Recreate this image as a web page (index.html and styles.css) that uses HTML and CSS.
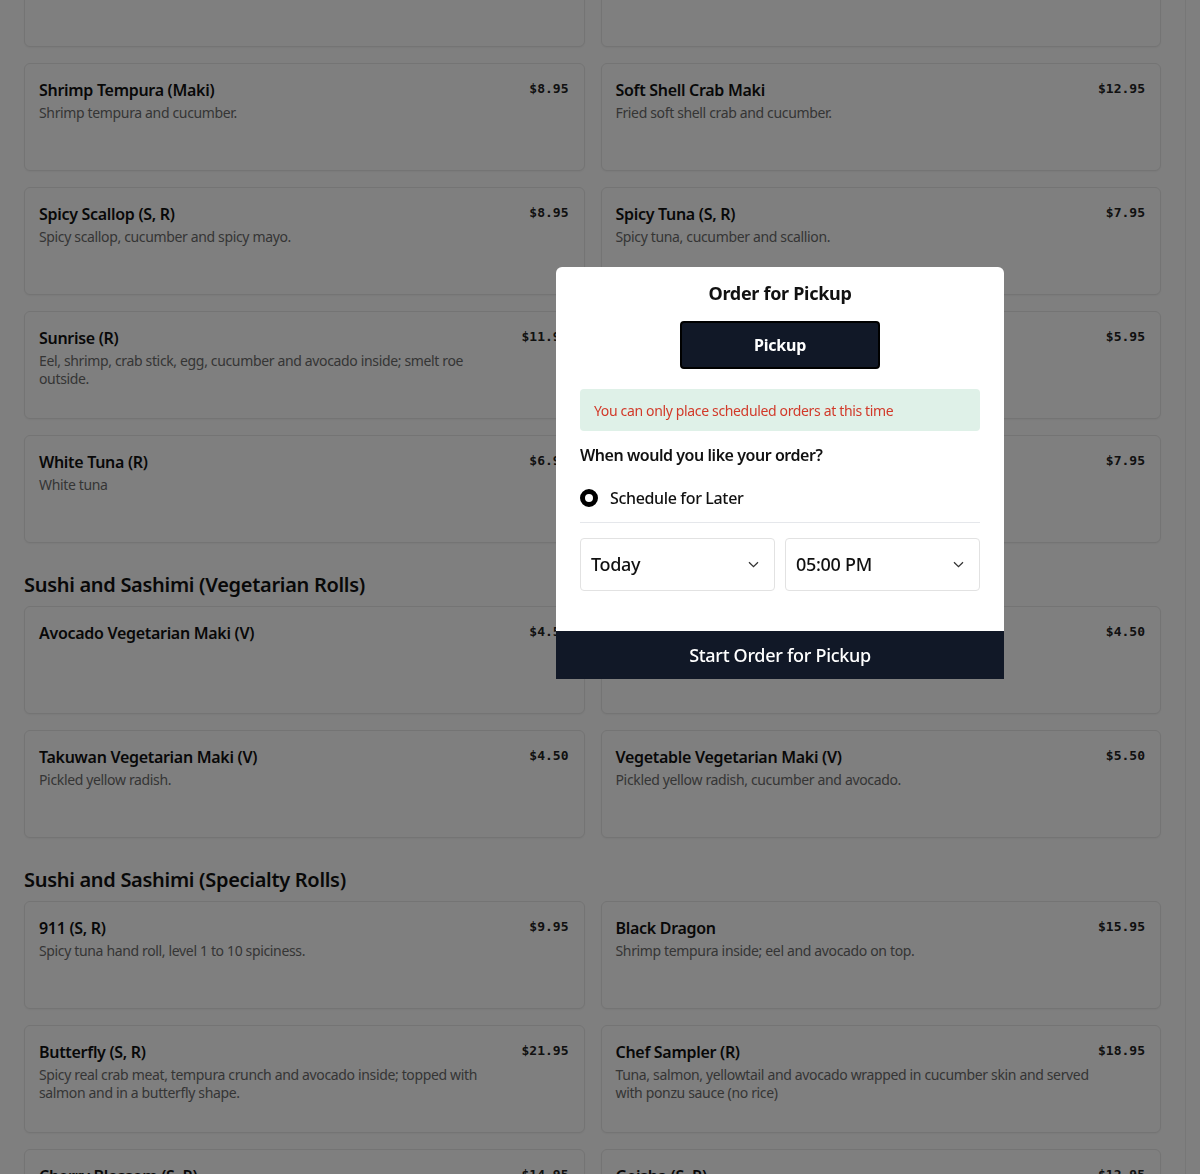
FILE: index.html
```html
<!DOCTYPE html>
<html lang="en">
<head>
<meta charset="utf-8">
<title>Menu - Order for Pickup</title>
<link rel="stylesheet" href="styles.css">
</head>
<body>
<div class="layout">
  <main class="main">
    <section class="section section-first">
      <div class="grid">
        <div class="card"><div class="card-text"><div class="card-title">Salmon Avocado Maki</div><div class="card-desc">Salmon and avocado.</div></div><div class="card-price">$7.95</div></div>
        <div class="card"><div class="card-text"><div class="card-title">Salmon Skin Maki</div><div class="card-desc">Salmon skin and cucumber.</div></div><div class="card-price">$6.95</div></div>

        <div class="card"><div class="card-text"><div class="card-title">Shrimp Tempura (Maki)</div><div class="card-desc">Shrimp tempura and cucumber.</div></div><div class="card-price">$8.95</div></div>
        <div class="card"><div class="card-text"><div class="card-title">Soft Shell Crab Maki</div><div class="card-desc">Fried soft shell crab and cucumber.</div></div><div class="card-price">$12.95</div></div>

        <div class="card"><div class="card-text"><div class="card-title">Spicy Scallop (S, R)</div><div class="card-desc">Spicy scallop, cucumber and spicy mayo.</div></div><div class="card-price">$8.95</div></div>
        <div class="card"><div class="card-text"><div class="card-title">Spicy Tuna (S, R)</div><div class="card-desc">Spicy tuna, cucumber and scallion.</div></div><div class="card-price">$7.95</div></div>

        <div class="card"><div class="card-text"><div class="card-title">Sunrise (R)</div><div class="card-desc">Eel, shrimp, crab stick, egg, cucumber and avocado inside; smelt roe outside.</div></div><div class="card-price">$11.95</div></div>
        <div class="card"><div class="card-text"><div class="card-title">Tuna Maki</div><div class="card-desc">Tuna.</div></div><div class="card-price">$5.95</div></div>

        <div class="card"><div class="card-text"><div class="card-title">White Tuna (R)</div><div class="card-desc">White tuna</div></div><div class="card-price">$6.95</div></div>
        <div class="card"><div class="card-text"><div class="card-title">Yellowtail Scallion Maki</div><div class="card-desc">Yellowtail and scallion.</div></div><div class="card-price">$7.95</div></div>
      </div>
    </section>

    <section class="section">
      <h2 class="section-title">Sushi and Sashimi (Vegetarian Rolls)</h2>
      <div class="grid">
        <div class="card"><div class="card-text"><div class="card-title">Avocado Vegetarian Maki (V)</div></div><div class="card-price">$4.50</div></div>
        <div class="card"><div class="card-text"><div class="card-title">Cucumber Vegetarian Maki (V)</div></div><div class="card-price">$4.50</div></div>

        <div class="card"><div class="card-text"><div class="card-title">Takuwan Vegetarian Maki (V)</div><div class="card-desc">Pickled yellow radish.</div></div><div class="card-price">$4.50</div></div>
        <div class="card"><div class="card-text"><div class="card-title">Vegetable Vegetarian Maki (V)</div><div class="card-desc">Pickled yellow radish, cucumber and avocado.</div></div><div class="card-price">$5.50</div></div>
      </div>
    </section>

    <section class="section">
      <h2 class="section-title">Sushi and Sashimi (Specialty Rolls)</h2>
      <div class="grid">
        <div class="card"><div class="card-text"><div class="card-title">911 (S, R)</div><div class="card-desc">Spicy tuna hand roll, level 1 to 10 spiciness.</div></div><div class="card-price">$9.95</div></div>
        <div class="card"><div class="card-text"><div class="card-title">Black Dragon</div><div class="card-desc">Shrimp tempura inside; eel and avocado on top.</div></div><div class="card-price">$15.95</div></div>

        <div class="card"><div class="card-text"><div class="card-title">Butterfly (S, R)</div><div class="card-desc">Spicy real crab meat, tempura crunch and avocado inside; topped with salmon and in a butterfly shape.</div></div><div class="card-price">$21.95</div></div>
        <div class="card"><div class="card-text"><div class="card-title">Chef Sampler (R)</div><div class="card-desc">Tuna, salmon, yellowtail and avocado wrapped in cucumber skin and served with ponzu sauce (no rice)</div></div><div class="card-price">$18.95</div></div>

        <div class="card"><div class="card-text"><div class="card-title">Cherry Blossom (S, R)</div><div class="card-desc">Spicy tuna inside; tuna and salmon on top.</div></div><div class="card-price">$14.95</div></div>
        <div class="card"><div class="card-text"><div class="card-title">Geisha (S, R)</div><div class="card-desc">Spicy salmon inside; avocado on top.</div></div><div class="card-price">$12.95</div></div>
      </div>
    </section>
  </main>
  <aside class="side"></aside>
</div>

<div class="overlay"></div>

<div class="modal" role="dialog" aria-label="Order for Pickup">
  <div class="modal-body">
    <h1 class="modal-title">Order for Pickup</h1>
    <div class="mode-row">
      <button class="mode-btn" type="button">Pickup</button>
    </div>
    <div class="alert">You can only place scheduled orders at this time</div>
    <div class="question">When would you like your order?</div>
    <label class="radio-row">
      <span class="radio"></span>
      <span class="radio-label">Schedule for Later</span>
    </label>
    <div class="divider"></div>
    <div class="selects">
      <div class="select">
        <span class="select-value">Today</span>
        <svg class="chev" width="11" height="7" viewBox="0 0 11 7"><path d="M1 1.2 L5.5 5.7 L10 1.2" fill="none" stroke="#333" stroke-width="1.3"/></svg>
      </div>
      <div class="select">
        <span class="select-value">05:00 PM</span>
        <svg class="chev" width="11" height="7" viewBox="0 0 11 7"><path d="M1 1.2 L5.5 5.7 L10 1.2" fill="none" stroke="#333" stroke-width="1.3"/></svg>
      </div>
    </div>
  </div>
  <button class="start-btn" type="button">Start Order for Pickup</button>
</div>
</body>
</html>
```

FILE: styles.css
```css
* { box-sizing: border-box; }

html, body {
  margin: 0;
  padding: 0;
  background: #ffffff;
  font-family: "Noto Sans", "Open Sans", sans-serif;
  color: #111111;
  overflow: hidden;
  height: 1174px;
}

.layout {
  display: flex;
  align-items: flex-start;
}

.main {
  width: 1186px;
  flex: 0 0 1186px;
  padding: 0 24px;
  border-right: 1px solid #eeeeee;
  min-height: 1174px;
}

.side {
  flex: 1;
}

.section-first {
  margin-top: -61px;
}

.section-title {
  font-size: 20px;
  line-height: 28px;
  font-weight: 600;
  margin: 28px 0 7px;
  letter-spacing: -0.3px;
  color: #111111;
}

.grid {
  display: grid;
  grid-template-columns: 1fr 1fr;
  gap: 16px;
}

.card {
  height: 108px;
  border: 1px solid #e8e8e8;
  border-radius: 6px;
  background: #ffffff;
  box-shadow: 0 1px 2px rgba(0, 0, 0, 0.05);
  padding: 14px 15px 14px 14px;
  display: flex;
  align-items: flex-start;
  gap: 4px;
}

.card-text {
  flex: 1;
  min-width: 0;
}

.card-title {
  font-size: 16px;
  line-height: 24px;
  font-weight: 600;
  letter-spacing: -0.3px;
  color: #111111;
}

.card-desc {
  margin-top: 2px;
  font-size: 14px;
  line-height: 18px;
  color: #6b6b6b;
  letter-spacing: -0.35px;
  max-width: 475px;
}

.card-price {
  font-family: "DejaVu Sans Mono", "Liberation Mono", monospace;
  font-weight: 700;
  font-size: 13px;
  line-height: 18px;
  color: #222222;
  white-space: nowrap;
  padding-top: 2px;
}

.overlay {
  position: fixed;
  inset: 0;
  background: rgba(0, 0, 0, 0.5);
}

.modal {
  position: absolute;
  left: 556px;
  top: 267px;
  width: 448px;
  background: #ffffff;
  border-radius: 6px 6px 0 0;
  overflow: hidden;
}

.modal-body {
  padding: 12px 24px 40px;
}

.modal-title {
  margin: 0;
  text-align: center;
  font-size: 18px;
  line-height: 28px;
  font-weight: 700;
  letter-spacing: -0.3px;
  color: #111111;
}

.mode-row {
  display: flex;
  justify-content: center;
  margin-top: 14px;
}

.mode-btn {
  width: 200px;
  height: 48px;
  background: #111827;
  border: 2px solid #000000;
  border-radius: 4px;
  color: #ffffff;
  font-family: inherit;
  font-size: 16px;
  font-weight: 700;
  letter-spacing: -0.2px;
}

.alert {
  margin-top: 20px;
  height: 42px;
  display: flex;
  align-items: center;
  padding: 0 14px;
  background: #dff1e8;
  border-radius: 4px;
  color: #d23a2a;
  font-size: 14px;
  letter-spacing: -0.35px;
}

.question {
  margin-top: 12px;
  font-size: 16px;
  line-height: 24px;
  font-weight: 600;
  letter-spacing: -0.45px;
  color: #111111;
}

.radio-row {
  margin-top: 19px;
  display: flex;
  align-items: center;
  gap: 12px;
  height: 24px;
}

.radio {
  width: 18px;
  height: 18px;
  border-radius: 50%;
  border: 5px solid #000000;
  background: #ffffff;
  flex: 0 0 18px;
}

.radio-label {
  font-size: 16px;
  line-height: 24px;
  font-weight: 500;
  letter-spacing: -0.35px;
  color: #111111;
}

.divider {
  margin-top: 12px;
  height: 1px;
  background: #e5e7eb;
}

.selects {
  margin-top: 15px;
  display: flex;
  gap: 10px;
}

.select {
  flex: 1;
  height: 53px;
  border: 1px solid #e2e2e2;
  border-radius: 4px;
  display: flex;
  align-items: center;
  justify-content: space-between;
  padding: 0 15px 1px 10px;
}

.select-value {
  font-size: 18px;
  line-height: 24px;
  font-weight: 500;
  letter-spacing: -0.3px;
  color: #111111;
}

.chev {
  display: block;
}

.start-btn {
  display: block;
  width: 100%;
  height: 48px;
  border: 0;
  padding-bottom: 2px;
  background: #111827;
  color: #ffffff;
  font-family: inherit;
  font-size: 18px;
  font-weight: 500;
  letter-spacing: -0.3px;
}
```
